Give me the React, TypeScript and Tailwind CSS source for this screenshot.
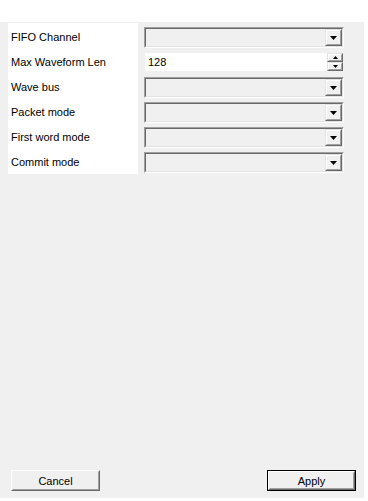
import React from "react";

const font = { fontFamily: '"Liberation Sans", Arial, sans-serif' };

function Sunken({ children }: { children?: React.ReactNode }) {
  return (
    <div className="h-[21px] w-[200px] border border-t-[#a0a0a0] border-l-[#a0a0a0] border-r-white border-b-white">
      <div className="flex h-full w-full border border-t-[#696969] border-l-[#696969] border-r-[#e3e3e3] border-b-[#e3e3e3] bg-[#f0f0f0]">
        {children}
      </div>
    </div>
  );
}

function RaisedBox({ className, children }: { className?: string; children?: React.ReactNode }) {
  return (
    <div className={"border border-t-[#e3e3e3] border-l-[#e3e3e3] border-r-[#696969] border-b-[#696969] " + (className ?? "")}>
      <div className="flex h-full w-full items-center justify-center border border-t-white border-l-white border-r-[#a0a0a0] border-b-[#a0a0a0] bg-[#f0f0f0]">
        {children}
      </div>
    </div>
  );
}

function Combo() {
  return (
    <Sunken>
      <div className="flex-1" />
      <RaisedBox className="h-full w-[17px]">
        <svg width="7" height="4" viewBox="0 0 7 4">
          <path d="M0 0H7L3.5 4Z" fill="#000" />
        </svg>
      </RaisedBox>
    </Sunken>
  );
}

function Spinner() {
  return (
    <div className="h-[21px] w-[200px] pt-[1px] pl-[1px]">
      <div className="flex h-[18px] w-[198px] bg-white">
        <div className="flex-1 pl-[3px] text-[11px] leading-[19px] text-black">128</div>
        <div className="flex w-[16px] flex-col">
          <RaisedBox className="h-[9px] w-[16px]">
            <svg width="5" height="3" viewBox="0 0 5 3">
              <path d="M2.5 0L5 3H0Z" fill="#000" />
            </svg>
          </RaisedBox>
          <RaisedBox className="h-[9px] w-[16px]">
            <svg width="5" height="3" viewBox="0 0 5 3">
              <path d="M0 0H5L2.5 3Z" fill="#000" />
            </svg>
          </RaisedBox>
        </div>
      </div>
    </div>
  );
}

const labels = ["FIFO Channel", "Max Waveform Len", "Wave bus", "Packet mode", "First word mode", "Commit mode"];

export default function App() {
  return (
    <div className="h-[501px] w-[368px] bg-white text-black" style={font}>
      <div className="h-[22px]" />
      <div className="flex h-[476px] w-[364px] flex-col bg-[#f0f0f0]">
        <div className="mt-[1px] flex">
          <div className="ml-[8px] h-[151px] w-[130px] overflow-hidden bg-white pt-[2px]">
            {labels.map((l) => (
              <div key={l} className="h-[25px] pl-[3px] text-[11px] leading-[25px]">
                {l}
              </div>
            ))}
          </div>
          <div className="ml-[6px] flex flex-col gap-[4px] pt-[4px]">
            <Combo />
            <Spinner />
            <Combo />
            <Combo />
            <Combo />
            <Combo />
          </div>
        </div>
        <div className="flex-1" />
        <div className="flex justify-between pb-[7px] pl-[11px] pr-[8px]">
          <div className="h-[21px] w-[89px] border border-t-white border-l-white border-r-[#696969] border-b-[#696969]">
            <div className="flex h-full w-full items-center justify-center border border-t-[#f0f0f0] border-l-[#f0f0f0] border-r-[#a0a0a0] border-b-[#a0a0a0] bg-[#f0f0f0] pt-[1px] text-[11px]">
              Cancel
            </div>
          </div>
          <div className="h-[21px] w-[89px] border border-black">
            <div className="h-full w-full border border-t-white border-l-white border-r-[#696969] border-b-[#696969]">
              <div className="flex h-full w-full items-center justify-center border border-t-[#f0f0f0] border-l-[#f0f0f0] border-r-[#a0a0a0] border-b-[#a0a0a0] bg-[#f0f0f0] pt-[1px] text-[11px]">
                Apply
              </div>
            </div>
          </div>
        </div>
      </div>
    </div>
  );
}
